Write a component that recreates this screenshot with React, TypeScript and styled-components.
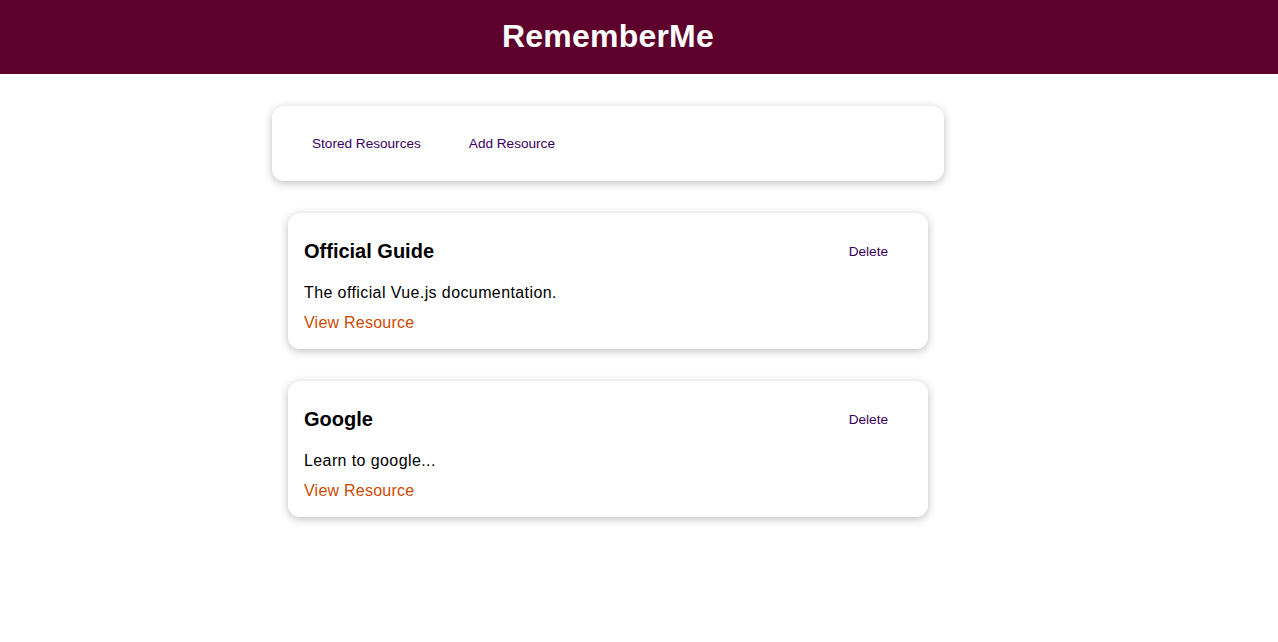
import React from "react";
import styled, { createGlobalStyle } from "styled-components";

const Global = createGlobalStyle`
  * { box-sizing: border-box; }
  html, body { margin: 0; padding: 0; background: #ffffff; }
  body { font-family: "Liberation Sans", Arial, sans-serif; color: #000; }
`;

const Header = styled.header`
  width: 100%;
  height: 74px;
  background: #5e002c;
`;

const Inner = styled.div`
  width: 1216px;
  height: 100%;
  display: flex;
  align-items: center;
  justify-content: center;
`;

const Title = styled.h1`
  margin: 0;
  color: #ffffff;
  font-size: 32px;
  font-weight: 700;
  line-height: 1;
  padding-bottom: 2px;
  letter-spacing: 0.2px;
`;

const Main = styled.main`
  width: 1216px;
  display: flex;
  flex-direction: column;
  align-items: center;
  padding: 32px 0 64px;
`;

const Card = styled.div<{ $w: number }>`
  width: ${(p) => p.$w}px;
  background: #fff;
  border-radius: 12px;
  box-shadow: 0 2px 8px rgba(0, 0, 0, 0.26);
  padding: 16px;
`;

const Nav = styled.div`
  display: flex;
  align-items: center;
`;

const FlatButton = styled.button<{ $h?: number }>`
  height: ${(p) => p.$h ?? 43}px;
  padding: 0 24px;
  border: none;
  background: transparent;
  color: #3a0061;
  font-family: "Liberation Sans", Arial, sans-serif;
  font-size: 13.6px;
  cursor: pointer;
`;

const List = styled.ul`
  list-style: none;
  margin: 0;
  padding: 0;
  display: flex;
  flex-direction: column;
  gap: 32px;
  margin-top: 32px;
`;

const Item = styled.li`
  display: block;
`;

const CardHeader = styled.div`
  height: 44px;
  display: flex;
  align-items: center;
  justify-content: space-between;
`;

const ResTitle = styled.h3`
  margin: 0;
  font-size: 20px;
  font-weight: 700;
`;

const Desc = styled.p`
  margin: 10px 0 10px;
  font-size: 16px;
  line-height: 20px;
  letter-spacing: 0.4px;
`;

const Link = styled.a`
  display: block;
  font-size: 16px;
  line-height: 20px;
  letter-spacing: 0.23px;
  color: #ce4a00;
  text-decoration: none;
`;

const resources = [
  { id: "official-guide", title: "Official Guide", description: "The official Vue.js documentation.", link: "https://vuejs.org" },
  { id: "google", title: "Google", description: "Learn to google...", link: "https://google.org" },
];

export default function App() {
  return (
    <>
      <Global />
      <Header>
        <Inner>
          <Title>RememberMe</Title>
        </Inner>
      </Header>
      <Main>
        <Card $w={672}>
          <Nav>
            <FlatButton>Stored Resources</FlatButton>
            <FlatButton>Add Resource</FlatButton>
          </Nav>
        </Card>
        <List>
          {resources.map((r) => (
            <Item key={r.id}>
              <Card $w={640}>
                <CardHeader>
                  <ResTitle>{r.title}</ResTitle>
                  <FlatButton $h={41}>Delete</FlatButton>
                </CardHeader>
                <Desc>{r.description}</Desc>
                <Link href="#">View Resource</Link>
              </Card>
            </Item>
          ))}
        </List>
      </Main>
    </>
  );
}
